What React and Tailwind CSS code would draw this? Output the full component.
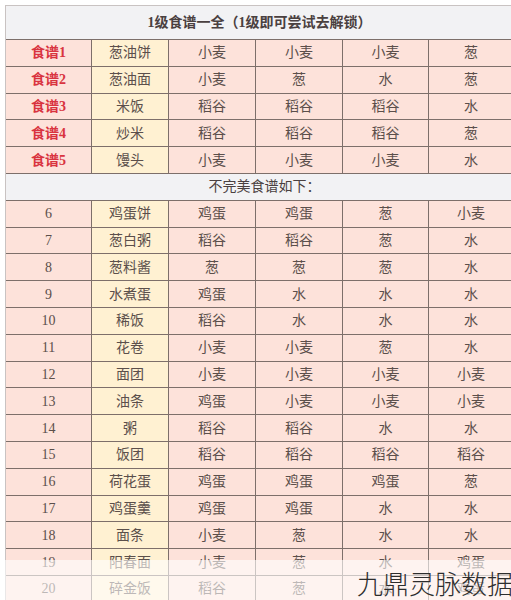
import React from "react"

const top = [
    ["食谱1", "葱油饼", "小麦", "小麦", "小麦", "葱"],
    ["食谱2", "葱油面", "小麦", "葱", "水", "葱"],
    ["食谱3", "米饭", "稻谷", "稻谷", "稻谷", "水"],
    ["食谱4", "炒米", "稻谷", "稻谷", "稻谷", "葱"],
    ["食谱5", "馒头", "小麦", "小麦", "小麦", "水"],
]

const rest = [
    ["6", "鸡蛋饼", "鸡蛋", "鸡蛋", "葱", "小麦"],
    ["7", "葱白粥", "稻谷", "稻谷", "葱", "水"],
    ["8", "葱料酱", "葱", "葱", "葱", "水"],
    ["9", "水煮蛋", "鸡蛋", "水", "水", "水"],
    ["10", "稀饭", "稻谷", "水", "水", "水"],
    ["11", "花卷", "小麦", "小麦", "葱", "水"],
    ["12", "面团", "小麦", "小麦", "小麦", "小麦"],
    ["13", "油条", "鸡蛋", "小麦", "小麦", "小麦"],
    ["14", "粥", "稻谷", "稻谷", "水", "水"],
    ["15", "饭团", "稻谷", "稻谷", "稻谷", "稻谷"],
    ["16", "荷花蛋", "鸡蛋", "鸡蛋", "鸡蛋", "葱"],
    ["17", "鸡蛋羹", "鸡蛋", "鸡蛋", "水", "水"],
    ["18", "面条", "小麦", "葱", "水", "水"],
    ["19", "阳春面", "小麦", "葱", "水", "鸡蛋"],
    ["20", "碎金饭", "稻谷", "葱", "水", "鸡蛋"],
]

function Row({ cells, red }) {
    return (
        <div className="grid grid-cols-[86px_77px_87px_87px_86px_1fr] h-[26.8px] border-b border-[#7d6f6a]">
            {cells.map((c, i) => (
                <div
                    key={i}
                    className={
                        "flex items-center justify-center border-r border-[#7d6f6a] last:border-r-0 " +
                        (i === 1 ? "bg-[#fff1d2] " : "bg-[#fde2da] ") +
                        (i === 0 && red ? "text-[#d9343f] font-bold" : "text-[#5b4f4b]")
                    }
                >
                    {c}
                </div>
            ))}
        </div>
    )
}

export default function App() {
    return (
        <div
            className="relative w-[511px] h-[600px] overflow-hidden bg-white text-[14px]"
            style={{ fontFamily: '"Liberation Serif", "Noto Sans CJK SC", serif' }}
        >
            <div className="ml-[5px] mt-[5px] w-[508px] border-t border-l border-[#c9c3c2]">
                <div className="h-[34px] flex items-center justify-center bg-[#f2f2f4] border-b border-[#7d6f6a] text-[#4a4040] font-bold">
                    1级食谱一全（1级即可尝试去解锁）
                </div>
                {top.map((r, i) => (
                    <Row key={i} cells={r} red />
                ))}
                <div className="h-[26.8px] flex items-center justify-center bg-[#f2f2f4] border-b border-[#7d6f6a] text-[#4a4040] pl-[10px]">
                    不完美食谱如下：
                </div>
                {rest.map((r, i) => (
                    <Row key={i} cells={r} />
                ))}
            </div>

            {/* 水印 */}
            <div className="absolute left-0 right-0 top-[560px] bottom-0 bg-white/60 flex items-center justify-end">
                <span
                    className="text-[26px] text-[#2d2d2d] leading-none mt-[6px] mr-[-2px] font-light"
                    style={{ fontFamily: '"Noto Sans CJK SC", sans-serif' }}
                >
                    九鼎灵脉数据
                </span>
            </div>
        </div>
    )
}
